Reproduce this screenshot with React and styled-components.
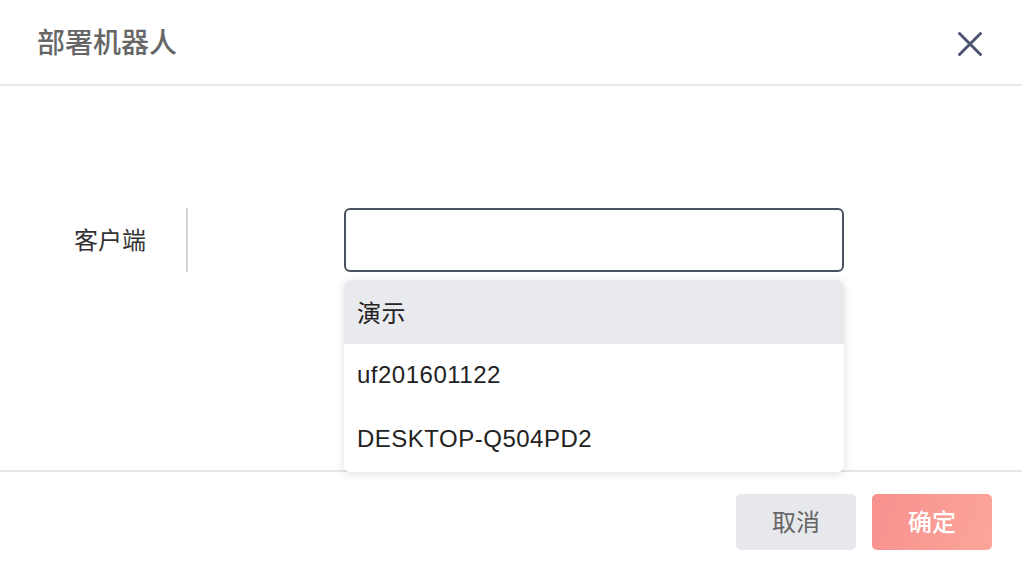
import React from "react";
import styled, { createGlobalStyle } from "styled-components";

const Global = createGlobalStyle`
  html, body { margin: 0; padding: 0; background: #fff; }
  body { font-family: "Liberation Sans", "Noto Sans CJK SC", sans-serif; }
  * { box-sizing: border-box; }
`;

const Modal = styled.div`
  width: 1022px;
  height: 566px;
  display: flex;
  flex-direction: column;
  background: #fff;
`;

const Header = styled.header`
  height: 86px;
  flex: none;
  display: flex;
  align-items: center;
  justify-content: space-between;
  padding: 0 38px 0 37px;
  border-bottom: 2px solid #e8e8e8;
`;

const Title = styled.h1`
  margin: 0 0 3px;
  font-family: "Noto Sans CJK SC", sans-serif;
  font-size: 28px;
  font-weight: 500;
  color: #666;
  line-height: 1;
`;

const CloseButton = styled.button`
  border: 0;
  background: none;
  padding: 0;
  width: 28px;
  height: 28px;
  display: flex;
  align-items: center;
  justify-content: center;
  margin-top: 4px;
  cursor: pointer;
`;

const Body = styled.main`
  flex: 1;
  padding-top: 122px;
`;

const FormRow = styled.div`
  display: flex;
  align-items: stretch;
  height: 64px;
`;

const Label = styled.div`
  width: 188px;
  flex: none;
  padding: 0 0 3px 74px;
  display: flex;
  align-items: center;
  border-right: 2px solid #d4d4d4;
  font-family: "Noto Sans CJK SC", sans-serif;
  font-size: 24px;
  color: #333;
`;

const Field = styled.div`
  position: relative;
  margin-left: 156px;
  width: 500px;
`;

const Input = styled.input`
  width: 500px;
  height: 64px;
  border: 2px solid #4a5261;
  border-radius: 6px;
  outline: none;
  padding: 0 14px;
  font-size: 24px;
  background: #fff;
`;

const Menu = styled.ul`
  position: absolute;
  left: 0;
  top: 72px;
  width: 500px;
  margin: 0;
  padding: 0;
  list-style: none;
  background: #fff;
  border-radius: 7px;
  overflow: hidden;
  box-shadow: 0 2px 10px rgba(0, 0, 0, 0.13);
  z-index: 2;
`;

const Option = styled.li`
  height: 64px;
  display: flex;
  align-items: center;
  padding: 0 0 2px 13px;
  font-size: 24px;
  letter-spacing: 0.5px;
  color: #222;
  background: ${(p) => (p.$active ? "#e9eaee" : "#fff")};
`;

const Footer = styled.footer`
  height: 96px;
  flex: none;
  border-top: 2px solid #e6e6e6;
  display: flex;
  justify-content: flex-end;
  align-items: flex-start;
  gap: 16px;
  padding: 22px 30px 0 0;
`;

const Button = styled.button`
  width: 120px;
  height: 56px;
  border: 0;
  border-radius: 5px;
  padding: 0 0 4px;
  font-family: "Noto Sans CJK SC", sans-serif;
  font-size: 24px;
  font-weight: ${(p) => (p.$primary ? 500 : 400)};
  color: ${(p) => (p.$primary ? "#fff" : "#666")};
  background: ${(p) =>
    p.$primary ? "linear-gradient(110deg, #f7918d 0%, #fca59b 100%)" : "#e6e8eb"};
  cursor: pointer;
`;

const options = ["演示", "uf201601122", "DESKTOP-Q504PD2"];

export default function App() {
  return (
    <>
      <Global />
      <Modal>
        <Header>
          <Title>部署机器人</Title>
          <CloseButton aria-label="close">
            <svg width="26" height="26" viewBox="0 0 26 26">
              <path
                d="M2.5 2.5 L23.5 23.5 M23.5 2.5 L2.5 23.5"
                stroke="#4b5570"
                strokeWidth="3"
                strokeLinecap="round"
              />
            </svg>
          </CloseButton>
        </Header>
        <Body>
          <FormRow>
            <Label>客户端</Label>
            <Field>
              <Input />
              <Menu>
                {options.map((o, i) => (
                  <Option key={o} $active={i === 0}>
                    {o}
                  </Option>
                ))}
              </Menu>
            </Field>
          </FormRow>
        </Body>
        <Footer>
          <Button>取消</Button>
          <Button $primary>确定</Button>
        </Footer>
      </Modal>
    </>
  );
}
